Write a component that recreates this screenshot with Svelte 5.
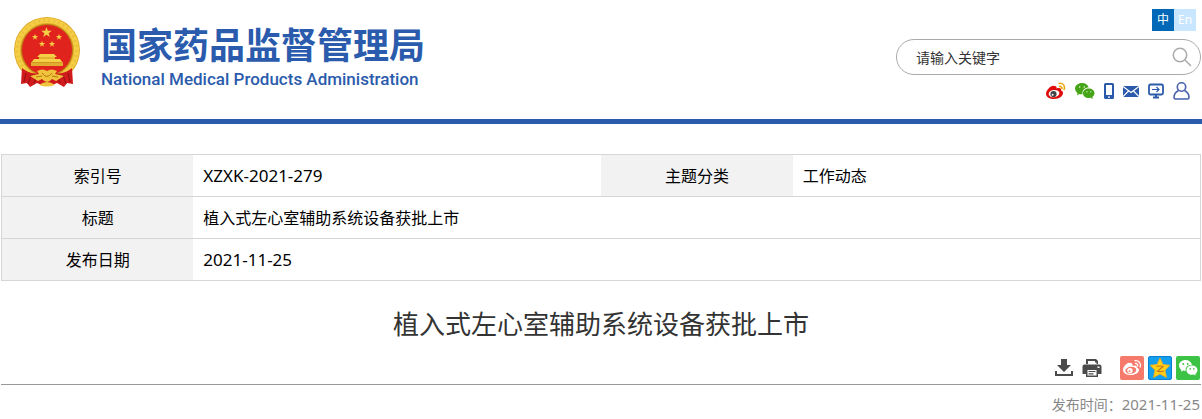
<script lang="ts">
  type Cell = { label: string; value: string; latin?: boolean };

  export let published: string = '2021-11-25';
  export let title: string = '植入式左心室辅助系统设备获批上市';

  let keyword = '';

  const rows: Cell[][] = [
    [
      { label: '索引号', value: 'XZXK-2021-279', latin: true },
      { label: '主题分类', value: '工作动态' },
    ],
    [{ label: '标题', value: title }],
    [{ label: '发布日期', value: published, latin: true }],
  ];

  const star = 'M0 -10L2.4 -3.2H9.5L3.8 1.2L5.9 8.1L0 4L-5.9 8.1L-3.8 1.2L-9.5 -3.2H-2.4Z';
  const smallStars = [
    [21, 20], [45, 20], [28, 27], [38, 27],
  ];
</script>

<header class="top">
  <a class="brand" href="/">
    <svg class="emblem" width="66" height="71" viewBox="0 0 66 71" aria-hidden="true">
      <!-- wreath -->
      <circle cx="33" cy="33" r="33" fill="#dfa828" />
      <circle cx="33" cy="33" r="29.500" fill="none" stroke="#f4cf45" stroke-width="5" />
      <circle cx="33" cy="33" r="29.500" fill="none" stroke="#ecc03b" stroke-width="3" stroke-dasharray="2 3" />
      <circle cx="33" cy="33" r="25.500" fill="#e0231d" stroke="#b97d14" stroke-width="1" />
      <!-- drapery -->
      <path d="M8 51Q16 58 26 56L40 56Q50 58 58 51L59 67L53 66L50 70L43 66L36 69H30L23 66L16 70L13 66L7 67Z" fill="#d01a1c" />
      <path d="M12 56L10 65M17 58L14 67M22 60L20 66M54 56L56 65M49 58L52 67M44 60L46 66" stroke="#930f14" stroke-width="1" />
      <g fill="#f5cf45">
        <path d={star} transform="translate(32.500 15.500) scale(.56)" />
        {#each smallStars as [x, y]}
          <path d={star} transform={`translate(${x} ${y}) scale(.33)`} />
        {/each}
        <!-- gate -->
        <path d="M26 37H40L43 40H41V42H46L49 46H17L20 42H25V40H23Z" />
        <path d="M17 46H49V49H17Z" fill="#e2ad2e" />
      </g>
      <path d="M25 41H41M18 45.500H48" stroke="#c58b18" stroke-width=".8" />
      <!-- ribbon and gear -->
      <path d="M23 54Q29 51 33 54Q37 51 43 54L41 57L50 59L42 64L38 62Q33 68 28 62L24 64L16 59L25 57Z" fill="#efc33b" />
      <path d="M28 56Q33 63 38 56M22 60L28 59M44 60L38 59" fill="none" stroke="#b8760f" stroke-width="1" />
      <path d="M25 68Q33 62 41 68Q33 71 25 68" fill="#f0c53d" />
    </svg>
    <span class="names">
      <span class="name-zh">国家药品监督管理局</span>
      <span class="name-en">National Medical Products Administration</span>
    </span>
  </a>

  <div class="tools">
    <nav class="lang" aria-label="语言">
      <a class="active" href="/">中</a>
      <a href="/en">En</a>
    </nav>

    <form class="search" on:submit|preventDefault>
      <input type="text" aria-label="关键字" placeholder="请输入关键字" bind:value={keyword} />
      <button type="submit" aria-label="搜索">
        <svg width="20" height="20" viewBox="0 0 20 20" fill="none" stroke="#aaa" stroke-width="1.5">
          <circle cx="8" cy="8" r="6.7" />
          <path d="M13 13L19 19" />
        </svg>
      </button>
    </form>

    <nav class="quick" aria-label="快捷入口">
      <a href="#weibo" aria-label="微博">
        <svg width="20" height="18" viewBox="0 0 20 18">
          <path d="M8 4C5.500 3 0 8 0 12C0 15 4 17 8 17C13 17 17 14 17 11C17 9.500 16 9 15 8.600C15.500 6 13.500 5.500 10.500 6.500C11 5 10 3.600 8 4Z" fill="#e00b0b" />
          <ellipse cx="8" cy="11.600" rx="5.400" ry="3.600" fill="#fff" transform="rotate(-8 8 11.600)" />
          <circle cx="7.500" cy="12" r="3.100" fill="#444" />
          <circle cx="6.600" cy="12.800" r="1" fill="#fff" />
          <path d="M12.500 1.500C17 .5 19.500 4 18 8M13 4.500C15 4 16.500 5.500 15.700 7.300" fill="none" stroke="#eeaa12" stroke-width="1.600" />
        </svg>
      </a>
      <a href="#wechat" aria-label="微信">
        <svg width="20" height="18" viewBox="0 0 20 18">
          <path d="M7 1C3 1 0 3.500 0 6.600C0 8.500 1 10 2.500 11L2 13.200L4.600 12C5.500 12.200 6.500 12.300 7.500 12.200C7 8 10 5.600 13.700 5.600C13 3 10.500 1 7 1Z" fill="#45a516" />
          <path d="M13.700 6.400C10.400 6.400 8 8.500 8 11.200C8 14 10.500 16 13.700 16L15.500 15.700L17.800 17L17.300 14.900C18.700 14 19.500 12.700 19.500 11.200C19.500 8.500 17 6.400 13.700 6.400Z" fill="#45a516" />
          <g fill="#fff">
            <circle cx="4.700" cy="5" r=".7" /><circle cx="9.300" cy="5" r=".7" />
            <circle cx="11.900" cy="9.800" r=".6" /><circle cx="15.700" cy="9.800" r=".6" />
          </g>
        </svg>
      </a>
      <a href="#mobile" aria-label="手机版">
        <svg width="10" height="18" viewBox="0 0 10 18">
          <rect x="0" y="1" width="10" height="16" rx="1.500" fill="#2c5aab" />
          <path d="M2 3H8V13H2Z" fill="#fff" />
          <path d="M4 14.500H6V15.700H4Z" fill="#fff" />
        </svg>
      </a>
      <a href="#mail" aria-label="邮箱">
        <svg width="16" height="18" viewBox="0 0 16 18">
          <path d="M0 4H16V15H0Z" fill="#2c5aab" />
          <path d="M0 4.500L8 10.500L16 4.500M0 14.500L5.500 9M16 14.500L10.500 9" fill="none" stroke="#fff" stroke-width="1.200" />
        </svg>
      </a>
      <a href="#desktop" aria-label="电脑版">
        <svg width="16" height="18" viewBox="0 0 16 18" fill="none" stroke="#2c5aab">
          <rect x="1" y="2.500" width="14" height="10" rx="1.500" stroke-width="1.800" />
          <path d="M4 7.500H11M8.500 5L11 7.500L8.500 10" stroke-width="1.200" />
          <path d="M8 13V15M5 15.500H11" stroke-width="2" />
        </svg>
      </a>
      <a href="#user" aria-label="用户">
        <svg width="17" height="18" viewBox="0 0 17 18" fill="none" stroke="#4a62ad" stroke-width="1.600">
          <circle cx="8.500" cy="5" r="4.200" />
          <path d="M5.500 8.500C2.500 10 1 12.500 1 15.500Q1 17 2.500 17H14.500Q16 17 16 15.500C16 12.500 14.500 10 11.500 8.500" />
        </svg>
      </a>
    </nav>
  </div>
</header>

<main>
  <table>
    <colgroup>
      <col class="col-label" /><col class="col-value" /><col class="col-label" /><col />
    </colgroup>
    <tbody>
      {#each rows as row}
        <tr>
          {#each row as cell}
            <th scope="row">{cell.label}</th>
            <td class:latin={cell.latin} colspan={row.length === 1 ? 3 : 1}>{cell.value}</td>
          {/each}
        </tr>
      {/each}
    </tbody>
  </table>

  <h1>{title}</h1>

  <div class="actions">
    <button type="button" aria-label="下载">
      <svg width="20" height="20" viewBox="0 0 20 20" fill="#4b4b4b">
        <path d="M7 1H13V7H17L10 14L3 7H7Z" />
        <path d="M1 13H3V16H17V13H19V18H1Z" />
      </svg>
    </button>
    <button type="button" aria-label="打印">
      <svg width="20" height="20" viewBox="0 0 20 20">
        <path d="M4 1H14L16 3V6H4Z" fill="#4b4b4b" />
        <path d="M6 3H13V4.500H14.500V6H6Z" fill="#fff" />
        <path d="M2.500 6.500H17.500Q19.500 6.500 19.500 8.500V16H16V19H4V16H.5V8.500Q.5 6.500 2.500 6.500Z" fill="#4b4b4b" />
        <path d="M5.500 12H14.500V17.500H5.500ZM15.500 8.500H17.500V10H15.500Z" fill="#fff" />
        <path d="M6.500 13.500H13.500M6.500 15.800H11.500" stroke="#4b4b4b" stroke-width="1.200" />
      </svg>
    </button>
    <div class="share">
      <button type="button" aria-label="分享到微博">
        <svg width="24" height="24" viewBox="0 0 24 24">
          <rect width="24" height="24" rx="2" fill="#f67a6c" />
          <path d="M10 7C7.500 6 3 10.500 3 14C3 17 6.500 19 11 19C15.500 19 19 16.500 19 14C19 12.500 18 11.800 16.700 11.400C17.300 9.500 15.500 8.800 12.500 10C13 8 12 6.500 10 7Z" fill="#fff" />
          <ellipse cx="10.800" cy="14.300" rx="5.500" ry="3.500" fill="#f67a6c" transform="rotate(-8 10.800 14.300)" />
          <circle cx="10" cy="14.600" r="2.700" fill="#fff" />
          <circle cx="9.500" cy="15.200" r=".9" fill="#f67a6c" />
          <path d="M14.500 4.700C19 4 21.500 7.500 20 11.500M15 7.500C17 7 18.300 8.700 17.500 10.500" fill="none" stroke="#fff" stroke-width="1.300" />
        </svg>
      </button>
      <button type="button" aria-label="分享到QQ空间">
        <svg width="24" height="24" viewBox="0 0 24 24">
          <rect x=".5" y=".5" width="23" height="23" rx="1.500" fill="#129fed" stroke="#087fd0" />
          <path d="M12 2L15 8.500L22 9.300L17 14.200L18.500 21.500L12 18L5.500 21.500L7 14.200L2 9.300L9 8.500Z" fill="#ffd018" stroke="#f6a81c" stroke-width=".8" stroke-linejoin="round" />
          <path d="M8.500 10.500Q12 9.500 15 10.500L9.500 15.200Q13 16.300 16 15" fill="none" stroke="#c4761b" stroke-width="1.200" />
        </svg>
      </button>
      <button type="button" aria-label="分享到微信">
        <svg width="24" height="24" viewBox="0 0 24 24">
          <rect width="24" height="24" rx="2" fill="#3cc244" />
          <path d="M9.500 4C5.800 4 3 6.400 3 9.500C3 11.300 4 12.800 5.400 13.800L4.900 15.800L7.200 14.600L9.700 15C9 11.500 12 8.700 16 8.800C15.200 6 12.600 4 9.500 4Z" fill="#fff" />
          <path d="M16 9.600C12.800 9.600 10.500 11.600 10.500 14.200C10.500 16.800 13 18.800 16 18.800L17.800 18.500L19.800 19.600L19.300 17.900C20.600 17 21.500 15.700 21.500 14.200C21.500 11.600 19 9.600 16 9.600Z" fill="#fff" />
          <g fill="#3cc244">
            <circle cx="7.300" cy="8" r=".9" /><circle cx="11.600" cy="8" r=".9" />
            <circle cx="14.200" cy="12.900" r=".8" /><circle cx="17.800" cy="12.900" r=".8" />
          </g>
        </svg>
      </button>
    </div>
  </div>

  <p class="date">发布时间：<time datetime={published}>{published}</time></p>
</main>

<style>
  :global(body) {
    margin: 0;
    background: #fff;
    color: #000;
    font-family: "Noto Sans", "Noto Sans CJK SC", sans-serif;
    font-size: 16px;
  }

  a { text-decoration: none; }

  button {
    display: block;
    padding: 0;
    border: 0;
    background: none;
    cursor: pointer;
  }

  svg { display: block; }

  .top {
    display: flex;
    justify-content: space-between;
    padding-bottom: 19px;
    border-bottom: 5px solid #2b5bac;
  }

  .brand {
    display: flex;
    align-items: flex-start;
    gap: 21px;
    padding: 17px 0 0 14px;
    color: #2b5bac;
  }

  .names {
    display: flex;
    flex-direction: column;
    gap: 4px;
    padding-top: 6px;
    white-space: nowrap;
  }

  .name-zh {
    font-family: "Noto Sans CJK SC", sans-serif;
    font-size: 36px;
    font-weight: 700;
    line-height: 40px;
  }

  .name-en {
    font-family: Roboto, sans-serif;
    font-size: 17px;
    font-weight: 500;
    line-height: 24px;
  }

  .tools {
    display: flex;
    flex-direction: column;
    align-items: flex-end;
    padding: 9px 1px 0 0;
  }

  .lang {
    display: flex;
    margin-right: 5px;
  }

  .lang a {
    width: 22px;
    background: #c8e6ff;
    color: #fff;
    font-size: 12px;
    line-height: 22px;
    text-align: center;
  }

  .lang .active { background: #0068b7; }

  .search {
    display: flex;
    align-items: center;
    box-sizing: border-box;
    width: 305px;
    height: 36px;
    margin: 8px 0 7px;
    padding: 0 8px 0 19px;
    border: 1px solid #aaa;
    border-radius: 18px;
  }

  .search input {
    flex: 1;
    min-width: 0;
    padding: 0;
    border: 0;
    outline: 0;
    background: none;
    font: 14px "Noto Sans CJK SC", sans-serif;
  }

  .search input::placeholder {
    color: #333;
    opacity: 1;
  }

  .quick {
    display: flex;
    gap: 9px;
    margin-right: 11px;
  }

  main { padding: 30px 1px 0; }

  table {
    width: 100%;
    border: 1px solid #d6d6d6;
    border-collapse: collapse;
    table-layout: fixed;
  }

  .col-label { width: 16%; }
  .col-value { width: 34%; }

  tr { border-top: 1px solid #d6d6d6; }

  th,
  td {
    height: 41px;
    padding: 0;
    font-weight: 400;
    line-height: 24px;
  }

  th { background: #f2f2f2; }
  td { padding-left: 10px; }

  .latin { font-size: 17px; }

  h1 {
    margin: 24px 0 13px;
    color: #333;
    font-size: 26px;
    font-weight: 400;
    line-height: 38px;
    text-align: center;
  }

  .actions {
    display: flex;
    justify-content: flex-end;
    align-items: center;
    gap: 8px;
    padding: 0 1px 4px 0;
    border-bottom: 1px solid #999;
  }

  .share {
    display: flex;
    gap: 4px;
    margin-left: 10px;
  }

  .date {
    margin: 7px 1px 0 0;
    color: #888;
    font-size: 14px;
    line-height: 24px;
    text-align: right;
  }

  .date time { font-size: 15px; }
</style>
